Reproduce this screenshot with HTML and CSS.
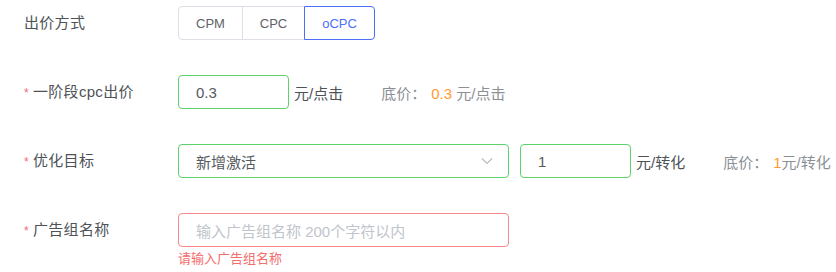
FILE: index.html
```html
<!DOCTYPE html>
<html lang="zh">
<head>
<meta charset="utf-8">
<title>出价设置</title>
<link rel="stylesheet" href="styles.css">
</head>
<body>
<form class="form">
  <div class="row">
    <label class="label">出价方式</label>
    <div class="control">
      <div class="seg">
        <button type="button" class="seg-btn">CPM</button>
        <button type="button" class="seg-btn">CPC</button>
        <button type="button" class="seg-btn active">oCPC</button>
      </div>
    </div>
  </div>
  <div class="row">
    <label class="label req">一阶段cpc出价</label>
    <div class="control">
      <div class="input ok short"><span class="val">0.3</span></div>
      <span class="unit">元/点击</span>
      <span class="floor">底价：<em class="num">0.3</em> 元/点击</span>
    </div>
  </div>
  <div class="row">
    <label class="label req">优化目标</label>
    <div class="control">
      <div class="input ok wide select"><span class="val">新增激活</span>
        <svg class="chev" width="12" height="8" viewBox="0 0 12 8"><path d="M1 1.5 L6 6.5 L11 1.5" fill="none" stroke="#b8bcc4" stroke-width="1.2"/></svg>
      </div>
      <div class="input ok short gap"><span class="val">1</span></div>
      <span class="unit">元/转化</span>
      <span class="floor">底价：<em class="num">1</em>元/转化</span>
    </div>
  </div>
  <div class="row">
    <label class="label req">广告组名称</label>
    <div class="control col">
      <div class="input err wide"><span class="ph">输入广告组名称 200个字符以内</span></div>
      <div class="errmsg">请输入广告组名称</div>
    </div>
  </div>
</form>
</body>
</html>
```
FILE: styles.css
```css
html, body {
  margin: 0;
  padding: 0;
  background: #fff;
}
body {
  font-family: "Liberation Sans", "Noto Sans CJK SC", sans-serif;
  font-size: 15px;
  color: #555a60;
}
.form {
  padding-top: 6px;
  display: flex;
  flex-direction: column;
  gap: 35px;
}
.row {
  display: flex;
  align-items: flex-start;
}
.label {
  width: 178px;
  box-sizing: border-box;
  padding-left: 24px;
  height: 34px;
  line-height: 34px;
  position: relative;
  color: #4e5257;
  letter-spacing: 0.3px;
}
.label.req { padding-left: 33px; }
.label.req::before {
  content: "*";
  position: absolute;
  left: 24px;
  top: 1px;
  color: #f56c6c;
  font-size: 12px;
}
.control {
  display: flex;
  align-items: center;
  height: 34px;
}
.control.col {
  flex-direction: column;
  align-items: flex-start;
  height: auto;
}
.seg {
  display: flex;
  height: 34px;
}
.seg-btn {
  font-family: "Liberation Sans", sans-serif;
  font-size: 13px;
  color: #5f6266;
  background: #fff;
  border: 1px solid #dcdfe6;
  margin-left: -1px;
  height: 34px;
  padding: 0;
  cursor: pointer;
}
.seg-btn:nth-child(1) { width: 65px; margin-left: 0; border-radius: 4px 0 0 4px; }
.seg-btn:nth-child(2) { width: 63px; }
.seg-btn:nth-child(3) { width: 71px; border-radius: 0 4px 4px 0; }
.seg-btn.active {
  border-color: #4d6ef9;
  color: #4d6ef9;
  position: relative;
}
.input {
  box-sizing: border-box;
  height: 34px;
  border: 1px solid #5fd16d;
  border-radius: 4px;
  padding: 0 17px;
  display: flex;
  align-items: center;
  color: #555a60;
  background: #fff;
}
.input.short { width: 111px; }
.input.wide { width: 331px; }
.input.gap { margin-left: 11px; }
.input.err { border-color: #f78a8a; }
.select { justify-content: space-between; padding-right: 15px; }
.ph { color: #c0c4cc; }
.unit {
  margin-left: 5px;
  color: #4e5257;
}
.floor {
  margin-left: 38px;
  color: #8c9096;
}
.num {
  font-style: normal;
  color: #ff9b30;
  margin-left: 5px;
}
.errmsg {
  font-size: 13px;
  color: #f56c6c;
  line-height: 18px;
  margin-top: 3px;
}
```
